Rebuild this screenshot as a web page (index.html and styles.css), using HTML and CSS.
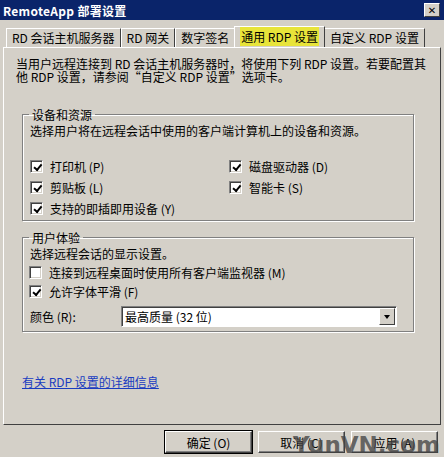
FILE: index.html
```html
<!DOCTYPE html>
<html>

<head>
  <meta charset="UTF-8">
  <title>RemoteApp 部署设置</title>
  <link rel="stylesheet" href="styles.css">
</head>

<body>
  <div class="dialog">
    <div class="titlebar">
      <span class="title">RemoteApp 部署设置</span>
      <span class="close">✕</span>
    </div>

    <div class="tabs">
      <div class="tab">RD 会话主机服务器</div>
      <div class="tab">RD 网关</div>
      <div class="tab">数字签名</div>
      <div class="tab active"><span class="mark">通用 RDP 设置</span></div>
      <div class="tab">自定义 RDP 设置</div>
    </div>

    <div class="panel">
      <p class="intro">当用户远程连接到 RD 会话主机服务器时，将使用下列 RDP 设置。若要配置其他 RDP 设置，请参阅“自定义 RDP 设置”选项卡。</p>

      <fieldset class="group group-devices">
        <legend>设备和资源</legend>
        <p class="desc">选择用户将在远程会话中使用的客户端计算机上的设备和资源。</p>
        <div class="checks">
          <label class="check"><span class="box on"></span>打印机 (P)</label>
          <label class="check"><span class="box on"></span>磁盘驱动器 (D)</label>
          <label class="check"><span class="box on"></span>剪贴板 (L)</label>
          <label class="check"><span class="box on"></span>智能卡 (S)</label>
          <label class="check wide"><span class="box on"></span>支持的即插即用设备 (Y)</label>
        </div>
      </fieldset>

      <fieldset class="group group-user">
        <legend>用户体验</legend>
        <p class="desc">选择远程会话的显示设置。</p>
        <label class="check"><span class="box"></span>连接到远程桌面时使用所有客户端监视器 (M)</label>
        <label class="check"><span class="box on"></span>允许字体平滑 (F)</label>
        <div class="color-row">
          <span class="color-label">颜色 (R):</span>
          <div class="select">
            <span class="value">最高质量 (32 位)</span>
            <span class="arrow"></span>
          </div>
        </div>
      </fieldset>

      <a class="more" href="#">有关 RDP 设置的详细信息</a>
    </div>

    <div class="buttons">
      <button class="btn">确定 (O)</button>
      <button class="btn">取消 (C)</button>
      <button class="btn">应用 (A)</button>
    </div>
  </div>
  <div class="watermark">YunVN.com</div>
</body>

</html>
```

FILE: styles.css
```css
* {
  box-sizing: border-box;
}

body {
  margin: 0;
  width: 444px;
  height: 457px;
  overflow: hidden;
  background: #d4d0c8;
  font-family: "Noto Sans CJK SC", "DejaVu Sans", sans-serif;
  font-size: 12px;
  color: #000;
  position: relative;
}

.dialog {
  display: flex;
  flex-direction: column;
  height: 457px;
}

.titlebar {
  height: 20px;
  background: #0a246a;
  display: flex;
  align-items: center;
  justify-content: space-between;
  padding: 0 4px 0 3px;
}

.title {
  color: #fff;
  font-weight: bold;
  font-size: 12px;
  letter-spacing: 0.3px;
}

.close {
  width: 16px;
  height: 14px;
  background: #d4d0c8;
  border: 1px solid;
  border-color: #fff #404040 #404040 #fff;
  font-size: 10px;
  font-weight: bold;
  line-height: 12px;
  text-align: center;
}

.tabs {
  display: flex;
  padding: 0 0 0 6px;
  height: 27px;
  align-items: flex-end;
}

.tab {
  height: 19px;
  padding: 0 5px;
  border: 1px solid;
  border-color: #fff #404040 transparent #fff;
  border-bottom: none;
  line-height: 17px;
  white-space: nowrap;
}

.tab.active {
  height: 21px;
  margin: 0 -1px;
  position: relative;
  z-index: 1;
  background: #d4d0c8;
  padding-top: 1px;
}

.mark {
  background: #e8e43a;
  padding: 1px 1px;
}

.panel {
  margin: 0 3px 0 3px;
  height: 378px;
  border: 1px solid;
  border-color: #fff #404040 #404040 #fff;
  padding: 9px 12px 0 12px;
}

.intro {
  margin: 0;
  line-height: 13px;
  width: 418px;
}

.group {
  margin: 0 0 0 6px;
  width: 392px;
  border: 1px solid #808080;
  box-shadow: 1px 1px 0 #fff, inset 1px 1px 0 #fff;
  padding: 0 0 0 7px;
}

.group legend {
  padding: 0 3px;
  margin-left: -1px;
  line-height: 13px;
}

.group-devices {
  margin-top: 25px;
  height: 113px;
}

.group-user {
  margin-top: 10px;
  height: 101px;
}

.desc {
  margin: 3px 0 0 0;
  line-height: 14px;
}

.checks {
  display: grid;
  grid-template-columns: 199px 1fr;
  row-gap: 7px;
  margin-top: 21px;
}

.check {
  display: flex;
  align-items: center;
  gap: 7px;
  height: 14px;
  white-space: nowrap;
}

.check.wide {
  grid-column: 1 / 3;
}

.group-user .check {
  margin-top: 5px;
  margin-left: -1px;
}

.group-user .desc + .check {
  margin-top: 4px;
}

.box {
  width: 13px;
  height: 13px;
  background: #fff;
  border: 1px solid;
  border-color: #808080 #fff #fff #808080;
  box-shadow: inset 1px 1px 0 #404040, inset -1px -1px 0 #d4d0c8;
  position: relative;
  flex: none;
}

.box.on::after {
  content: "";
  position: absolute;
  left: 2px;
  top: 1px;
  width: 6px;
  height: 3px;
  border-left: 2px solid #000;
  border-bottom: 2px solid #000;
  transform: rotate(-50deg) translate(-1px, 2px);
}

.color-row {
  display: flex;
  align-items: center;
  margin-top: 8px;
}

.color-label {
  width: 91px;
}

.select {
  width: 276px;
  height: 21px;
  background: #fff;
  border: 1px solid;
  border-color: #808080 #fff #fff #808080;
  box-shadow: inset 1px 1px 0 #404040;
  display: flex;
  align-items: center;
  justify-content: space-between;
  padding: 0 1px 0 3px;
}

.arrow {
  width: 16px;
  height: 17px;
  background: #d4d0c8;
  border: 1px solid;
  border-color: #fff #404040 #404040 #fff;
  position: relative;
}

.arrow::after {
  content: "";
  position: absolute;
  left: 4px;
  top: 6px;
  border-left: 3px solid transparent;
  border-right: 3px solid transparent;
  border-top: 4px solid #000;
}

.more {
  display: inline-block;
  margin: 41px 0 0 6px;
  color: #1a3cc0;
}

.buttons {
  display: flex;
  justify-content: flex-end;
  gap: 6px;
  padding: 6px 6px 0 0;
}

.btn {
  width: 87px;
  height: 22px;
  font: inherit;
  background: #d4d0c8;
  border: 1px solid;
  border-color: #fff #404040 #404040 #fff;
  box-shadow: inset -1px -1px 0 #808080;
  padding: 0;
}

.btn:first-child {
  outline: 1px solid #000;
}

.watermark {
  position: absolute;
  right: 4px;
  bottom: 0;
  line-height: 24px;
  font-family: "DejaVu Sans", sans-serif;
  font-weight: bold;
  font-size: 23px;
  color: rgba(70, 70, 70, 0.8);
}
```
